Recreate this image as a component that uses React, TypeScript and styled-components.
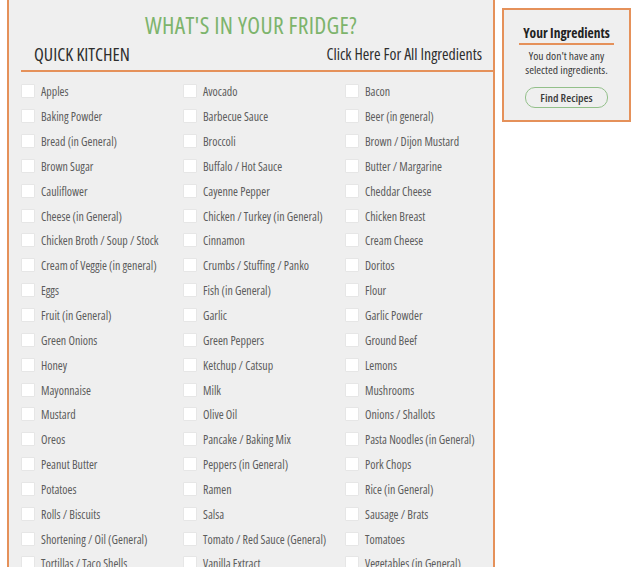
import { createGlobalStyle, styled } from "styled-components";

const items = [
  "Apples", "Avocado", "Bacon",
  "Baking Powder", "Barbecue Sauce", "Beer (in general)",
  "Bread (in General)", "Broccoli", "Brown / Dijon Mustard",
  "Brown Sugar", "Buffalo / Hot Sauce", "Butter / Margarine",
  "Cauliflower", "Cayenne Pepper", "Cheddar Cheese",
  "Cheese (in General)", "Chicken / Turkey (in General)", "Chicken Breast",
  "Chicken Broth / Soup / Stock", "Cinnamon", "Cream Cheese",
  "Cream of Veggie (in general)", "Crumbs / Stuffing / Panko", "Doritos",
  "Eggs", "Fish (in General)", "Flour",
  "Fruit (in General)", "Garlic", "Garlic Powder",
  "Green Onions", "Green Peppers", "Ground Beef",
  "Honey", "Ketchup / Catsup", "Lemons",
  "Mayonnaise", "Milk", "Mushrooms",
  "Mustard", "Olive Oil", "Onions / Shallots",
  "Oreos", "Pancake / Baking Mix", "Pasta Noodles (in General)",
  "Peanut Butter", "Peppers (in General)", "Pork Chops",
  "Potatoes", "Ramen", "Rice (in General)",
  "Rolls / Biscuits", "Salsa", "Sausage / Brats",
  "Shortening / Oil (General)", "Tomato / Red Sauce (General)", "Tomatoes",
  "Tortillas / Taco Shells", "Vanilla Extract", "Vegetables (in General)",
];

export default function App() {
  return (
    <>
      <GlobalStyle />
      <Page>
        <Fridge>
          <Title>WHAT'S IN YOUR FRIDGE?</Title>
          <HeaderRow>
            <Kitchen>QUICK KITCHEN</Kitchen>
            <AllLink>Click Here For All Ingredients</AllLink>
          </HeaderRow>
          <List>
            {items.map((name) => (
              <Item key={name}>
                <Box type="checkbox" />
                <Label>{name}</Label>
              </Item>
            ))}
          </List>
        </Fridge>
        <Sidebar>
          <SideTitle>Your Ingredients</SideTitle>
          <SideText>
            You don't have any
            <br />
            selected ingredients.
          </SideText>
          <FindButton>Find Recipes</FindButton>
        </Sidebar>
      </Page>
    </>
  );
}

const GlobalStyle = createGlobalStyle`
  html, body {
    margin: 0;
    padding: 0;
    background: #ffffff;
    overflow: hidden;
  }
  * {
    box-sizing: border-box;
  }
  body {
    font-family: "Open Sans", "Liberation Sans", sans-serif;
    font-stretch: 75%;
  }
`;

const Page = styled.div`
  display: flex;
  align-items: flex-start;
  gap: 7px;
  padding-left: 7px;
  height: 567px;
`;

const Fridge = styled.div`
  width: 488px;
  height: 620px;
  background: #efefef;
  border-left: 2px solid #e5915a;
  border-right: 2px solid #e5915a;
  display: flex;
  flex-direction: column;
`;

const Title = styled.h1`
  margin: 11px 0 0 0;
  font-size: 23.5px;
  line-height: 28px;
  font-weight: 500;
  text-align: center;
  color: #7db46c;
  letter-spacing: 0.3px;
`;

const HeaderRow = styled.div`
  margin-left: 12px;
  display: flex;
  align-items: flex-end;
  justify-content: space-between;
  padding: 5px 11px 5px 13px;
  border-bottom: 2px solid #e5915a;
`;

const Kitchen = styled.span`
  font-size: 18px;
  line-height: 21px;
  font-weight: 500;
  color: #2e2e2e;
`;

const AllLink = styled.span`
  font-size: 15.8px;
  line-height: 21px;
  font-weight: 500;
  color: #2e2e2e;
  cursor: pointer;
`;

const List = styled.div`
  display: grid;
  grid-template-columns: repeat(3, 162px);
  grid-auto-rows: 24.85px;
  padding: 7px 0 0 12px;
`;

const Item = styled.label`
  display: flex;
  align-items: center;
  gap: 6px;
`;

const Box = styled.input`
  appearance: none;
  margin: 0;
  width: 14px;
  height: 14px;
  background: #ffffff;
  border: 1px solid #e6e6e6;
  border-radius: 1px;
  flex-shrink: 0;
`;

const Label = styled.span`
  font-size: 11.9px;
  font-weight: 400;
  color: #5c5c5c;
  white-space: nowrap;
`;

const Sidebar = styled.div`
  margin-top: 8px;
  width: 129px;
  height: 114px;
  background: #efefef;
  border: 2px solid #e5915a;
  display: flex;
  flex-direction: column;
  align-items: center;
  padding-top: 15px;
`;

const SideTitle = styled.div`
  font-size: 13.5px;
  line-height: 16px;
  font-weight: 700;
  color: #222222;
  padding: 0 0 2px;
  width: 95px;
  text-align: center;
  border-bottom: 2px solid #e5915a;
`;

const SideText = styled.div`
  margin-top: 4px;
  font-size: 11.6px;
  line-height: 14px;
  color: #3a3a3a;
  text-align: center;
`;

const FindButton = styled.button`
  margin-top: 10px;
  width: 83px;
  height: 21px;
  background: #efefef;
  border: 1.5px solid #93c08a;
  border-radius: 10px;
  font-family: inherit;
  font-stretch: 75%;
  font-size: 11.5px;
  font-weight: 600;
  color: #3a3a3a;
  padding: 0;
`;
